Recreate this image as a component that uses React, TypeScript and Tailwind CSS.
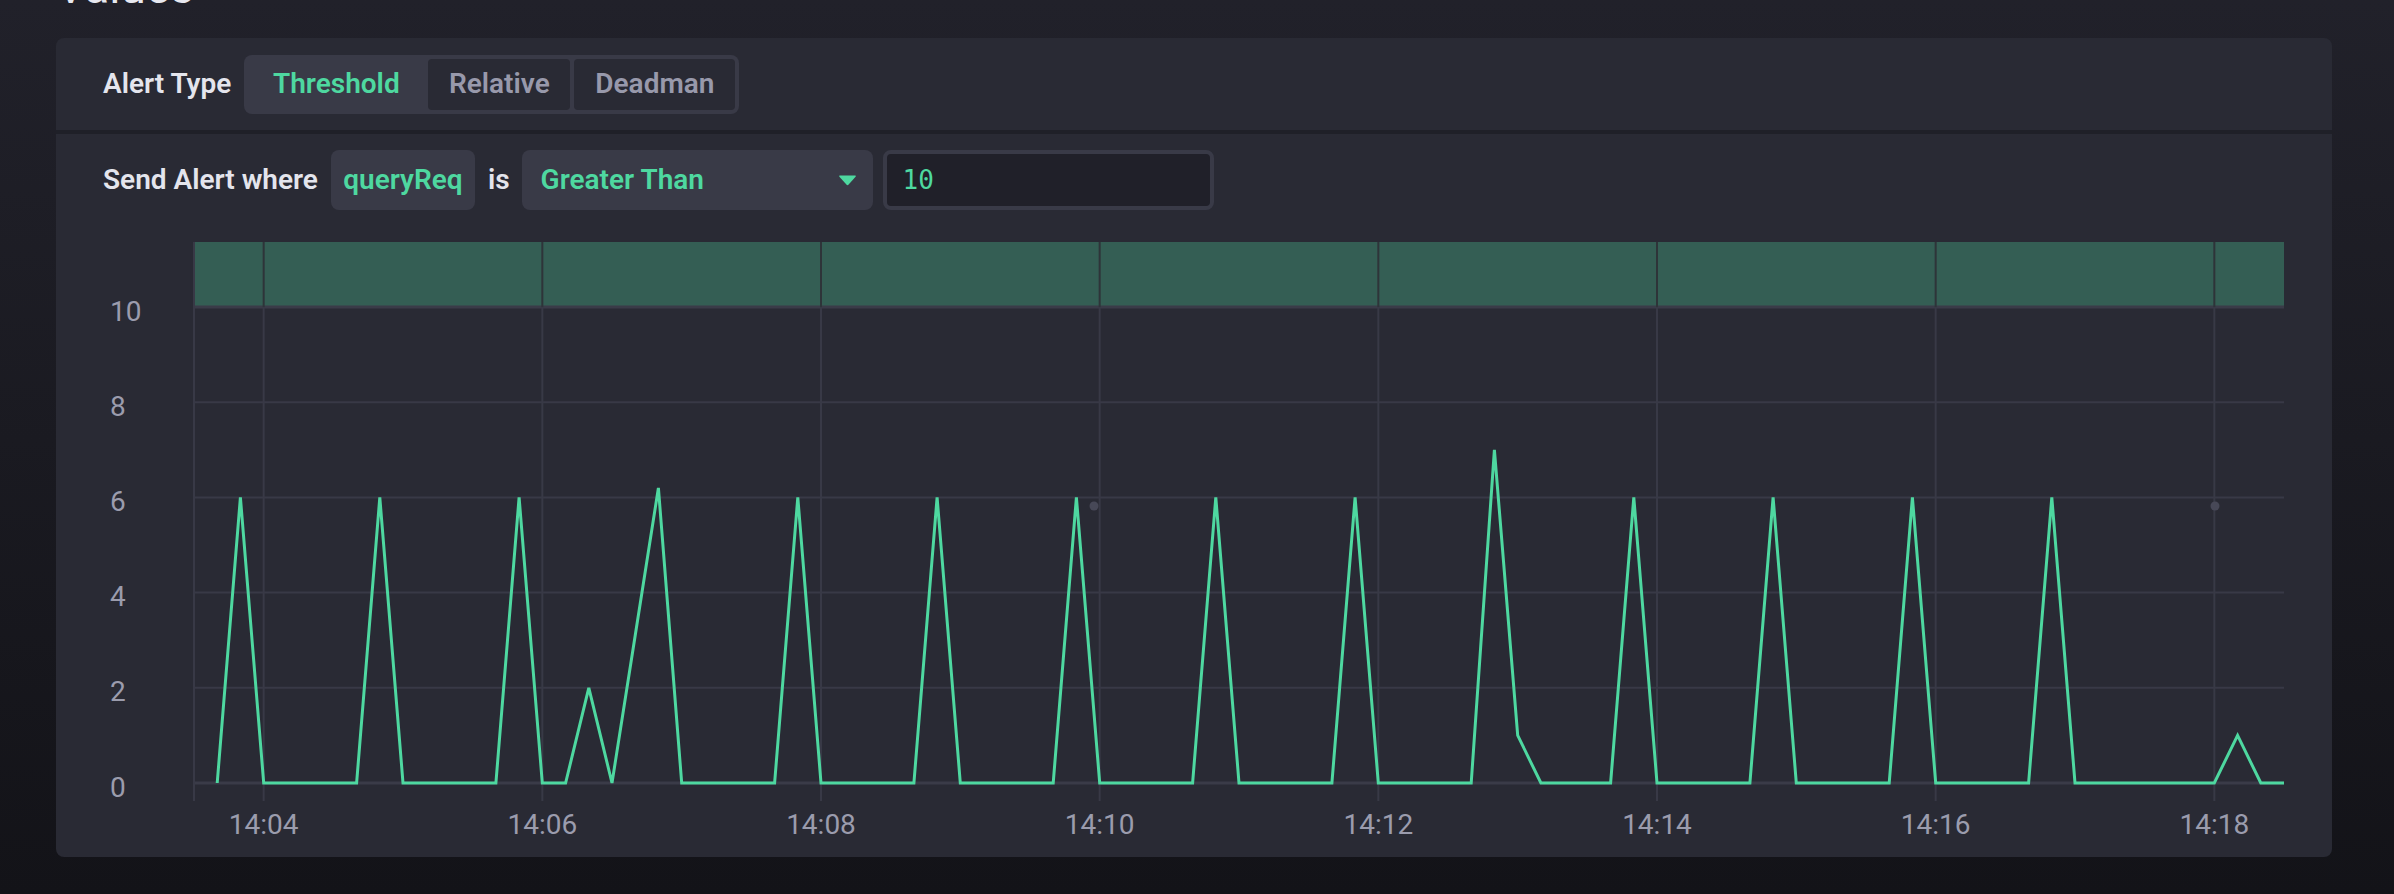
import React from 'react';

// Threshold check editor: alert type switch, condition row and a line chart
const GREEN = '#4ed8a0';
const GRID = '#383946';

// chart geometry (px, inside the svg)
const PLOT_LEFT = 138;
const PLOT_RIGHT = 2228;
const BAND_TOP = 32;
const ZERO_Y = 573;
const UNIT = 47.6; // px per value unit
const T_START = -30; // seconds relative to 14:04:00
const T_END = 870;

const xAt = (t: number) => PLOT_LEFT + ((t - T_START) * (PLOT_RIGHT - PLOT_LEFT)) / (T_END - T_START);
const yAt = (v: number) => ZERO_Y - v * UNIT;

// one sample every 10s, spikes every minute at :50
const special: Record<number, number> = {
  140: 2,
  160: 3.1,
  170: 6.2,
  530: 7,
  540: 1,
  830: 0,
  850: 1,
};

const valueAt = (t: number): number => {
  if (special[t] !== undefined) return special[t];
  const sec = ((t % 60) + 60) % 60;
  return sec === 50 ? 6 : 0;
};

const points: string[] = [];
for (let t = -20; t <= 870; t += 10) {
  points.push(`${xAt(t).toFixed(1)},${yAt(valueAt(t)).toFixed(1)}`);
}

const xTicks = [0, 120, 240, 360, 480, 600, 720, 840];
const xLabels = ['14:04', '14:06', '14:08', '14:10', '14:12', '14:14', '14:16', '14:18'];
const yTicks = [0, 2, 4, 6, 8, 10];

function ThresholdChart() {
  const thresholdY = yAt(10);
  return (
    <svg width={2276} height={647} className="block" style={{ fontFamily: 'Roboto, "Liberation Sans", sans-serif' }}>
      {/* threshold band */}
      <rect x={PLOT_LEFT + 1} y={BAND_TOP} width={PLOT_RIGHT - PLOT_LEFT - 1} height={thresholdY - BAND_TOP} fill="#345e54" />

      {/* horizontal grid */}
      {[2, 4, 6, 8].map((v) => (
        <line key={v} x1={PLOT_LEFT} x2={PLOT_RIGHT} y1={yAt(v)} y2={yAt(v)} stroke={GRID} strokeWidth={2} />
      ))}
      <line x1={PLOT_LEFT} x2={PLOT_RIGHT} y1={thresholdY} y2={thresholdY} stroke="#3a3b48" strokeWidth={3} />
      <line x1={PLOT_LEFT} x2={PLOT_RIGHT} y1={ZERO_Y} y2={ZERO_Y} stroke="#3a3b48" strokeWidth={3} />

      {/* vertical grid + ticks */}
      <line x1={PLOT_LEFT} x2={PLOT_LEFT} y1={BAND_TOP} y2={591} stroke={GRID} strokeWidth={2} />
      {xTicks.map((t) => (
        <g key={t}>
          <line x1={xAt(t)} x2={xAt(t)} y1={BAND_TOP} y2={thresholdY} stroke="#2e3439" strokeWidth={2} />
          <line x1={xAt(t)} x2={xAt(t)} y1={thresholdY} y2={591} stroke={GRID} strokeWidth={2} />
        </g>
      ))}

      {/* hover markers */}
      <circle cx={1038} cy={296} r={4.5} fill="#474857" />
      <circle cx={2159} cy={296} r={4.5} fill="#474857" />

      <polyline points={points.join(' ')} fill="none" stroke={GREEN} strokeWidth={3} />

      {/* axis labels */}
      {yTicks.map((v) => (
        <text key={v} x={54} y={yAt(v) + 13.5} fontSize={28} fill="#9b9cad">
          {v}
        </text>
      ))}
      {xTicks.map((t, i) => (
        <text key={t} x={xAt(t)} y={624} fontSize={28} fill="#9b9cad" textAnchor="middle">
          {xLabels[i]}
        </text>
      ))}
    </svg>
  );
}

export default function App() {
  return (
    <div
      className="min-h-[894px] w-[2394px] overflow-hidden bg-gradient-to-b from-[#21212a] to-[#131318]"
      style={{ fontFamily: 'Roboto, "Liberation Sans", sans-serif' }}
    >
      <div className="-mt-[37px] h-[48px] pl-[56px] text-[46px] leading-[48px] text-[#e7e8ef]">Values</div>

      <div className="mt-[27px] ml-[56px] w-[2276px] overflow-hidden rounded-lg bg-[#292a34]">
        {/* alert type */}
        <div className="flex h-[96px] items-center gap-[13px] border-b-4 border-[#1f2028] pl-[47px]">
          <span className="text-[28px] font-semibold text-[#e4e5ed]">Alert Type</span>
          <div className="flex h-[59px] gap-1 rounded-lg bg-[#393a47] p-1 text-[28px] font-semibold">
            <div className="flex w-[176px] items-center justify-center rounded text-[#4ed8a0]">Threshold</div>
            <div className="flex w-[142px] items-center justify-center rounded bg-[#292a34] text-[#9899ab]">Relative</div>
            <div className="flex w-[161px] items-center justify-center rounded bg-[#292a34] text-[#9899ab]">Deadman</div>
          </div>
        </div>

        {/* condition */}
        <div className="flex items-center pt-4 pl-[47px] text-[28px] font-semibold">
          <span className="text-[#e4e5ed]">Send Alert where</span>
          <div className="ml-[13px] flex h-[60px] w-[144px] items-center justify-center rounded-lg bg-[#393a47] text-[#4ed8a0]">
            queryReq
          </div>
          <span className="ml-[13px] text-[#e4e5ed]">is</span>
          <div className="ml-[12px] flex h-[60px] w-[351px] items-center justify-between rounded-lg bg-[#393a47] pr-4 pl-[19px] text-[#4ed8a0]">
            <span>Greater Than</span>
            <svg width="19" height="12" viewBox="0 0 19 12">
              <path d="M2 1.5 H17 Q18.5 1.5 17.6 2.8 L10.6 10.6 Q9.5 11.8 8.4 10.6 L1.4 2.8 Q0.5 1.5 2 1.5 Z" fill={GREEN} />
            </svg>
          </div>
          <div className="ml-[10px] flex h-[60px] w-[331px] items-center rounded-lg border-4 border-[#393a47] bg-[#202029] pl-4">
            <span className="text-[26px] font-normal text-[#4ed8a0]" style={{ fontFamily: '"DejaVu Sans Mono", "Liberation Mono", monospace' }}>
              10
            </span>
          </div>
        </div>

        <ThresholdChart />
      </div>
    </div>
  );
}
